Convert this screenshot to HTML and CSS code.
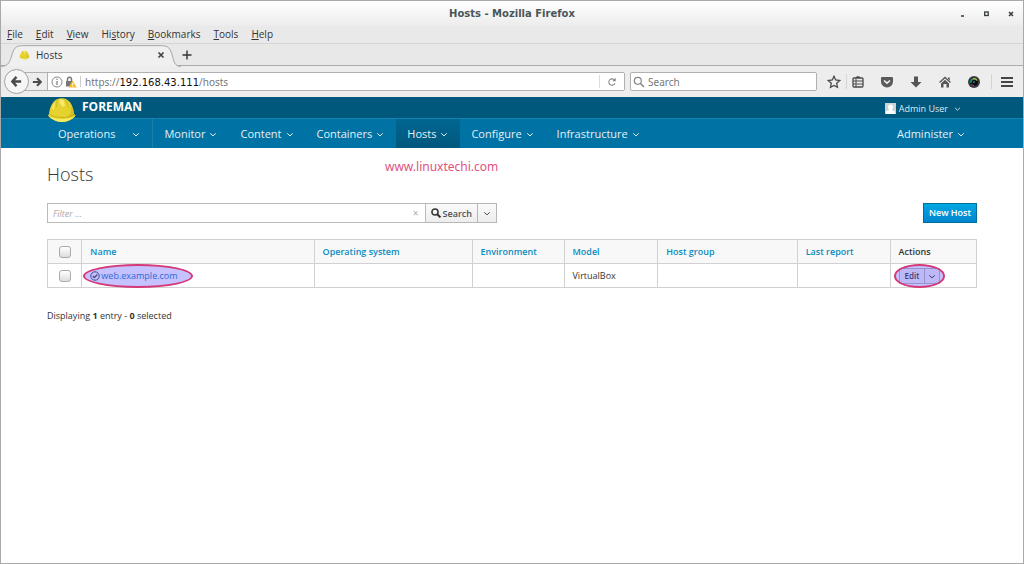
FILE: index.html
```html
<!DOCTYPE html>
<html lang="en">
<head>
<meta charset="utf-8">
<meta name="viewport" content="width=device-width, initial-scale=1">
<title>Hosts</title>
<link rel="stylesheet" href="styles.css">
</head>
<body>
<svg class="defs" aria-hidden="true">
  <symbol id="chev" viewBox="0 0 8 8"><path d="M1.2 3.300 4 5.900 6.800 3.300" fill="none" stroke="currentColor" stroke-width="1"/></symbol>
  <symbol id="helmet" viewBox="0 0 30 26">
    <path d="M2 17C3 8 7 1.500 14 1.200 22 1 26 7 27 17l1.500 1.500C26 22 21 25 15 25S4 22 1 18.500z" fill="#e6d22f"/>
    <path d="M24 8c2 3 3 6 3 9l1.500 1.500C26 22 21 25 15 25c5-3 10-8 9-17z" fill="#d0b920" opacity=".7"/>
    <path d="M1 18.500c6 4.500 21 4.500 27.500 0C26 22 21 25 15 25S4 22 1 18.500z" fill="#f6ec62"/>
    <path d="M3 17.500c6 4 18 4 24 0" fill="none" stroke="#c0a916" stroke-width=".8"/>
    <path d="M10.500 3C9.500 5 9 7 9.500 10M18 2.500c2 2 3 4 3 8" fill="none" stroke="#cdb824" stroke-width="1"/>
    <path d="M12 3c2-1 4-1 5 1l1 5c-2 1-4 0-5-2z" fill="#f5ea6c"/>
    <path d="M5 12c0-3 1-5 3-7l-1 8z" fill="#f5ea62"/>
  </symbol>
</svg>
<div class="window">
  <header class="titlebar">
    <h1 class="title">Hosts - Mozilla Firefox</h1>
    <div class="wm">
      <button class="wm-btn" aria-label="Minimize"><svg viewBox="0 0 8 8" width="8" height="8"><path d="M2 6h3" stroke="#333b3e" stroke-width="1.500"/></svg></button>
      <button class="wm-btn" aria-label="Maximize"><svg viewBox="0 0 8 8" width="8" height="8"><rect x="1.700" y="2" width="3.500" height="3.500" fill="none" stroke="#333b3e" stroke-width="1.300"/></svg></button>
      <button class="wm-btn" aria-label="Close"><svg viewBox="0 0 8 8" width="8" height="8"><path d="M2 2l4 4M6 2 2 6" stroke="#333b3e" stroke-width="1.500"/></svg></button>
    </div>
  </header>
  <nav class="menubar" aria-label="Menu bar">
    <button><u>F</u>ile</button><button><u>E</u>dit</button><button><u>V</u>iew</button><button>Hi<u>s</u>tory</button><button><u>B</u>ookmarks</button><button><u>T</u>ools</button><button><u>H</u>elp</button>
  </nav>
  <div class="tabs">
    <div class="tab">
      <svg class="tab-shape" viewBox="0 0 182 23" aria-hidden="true"><path d="M0 22.500C8 22.500 9 17 11 11S14 1.500 22 1.500H162C170 1.500 171 5 173 11S175 22.500 182 22.500" fill="#f0f0f0" stroke="#a5a5a5"/></svg>
      <svg class="favicon" width="11" height="10" aria-hidden="true"><use href="#helmet"/></svg>
      <span class="tab-name">Hosts</span>
      <button class="icon-btn" aria-label="Close tab"><svg viewBox="0 0 8 8" width="8" height="8"><path d="M1.500 1.500l5 5M6.500 1.500l-5 5" stroke="#444" stroke-width="1.700"/></svg></button>
    </div>
    <button class="icon-btn new-tab" aria-label="New tab"><svg viewBox="0 0 10 10" width="10" height="10"><path d="M5 .5v9M.5 5h9" stroke="#333" stroke-width="1.400"/></svg></button>
  </div>
  <div class="toolbar">
    <button class="back" aria-label="Back"><svg viewBox="0 0 14 14" width="13" height="13"><path d="M7 2 2.500 7 7 12M3 7h9" fill="none" stroke="#4a4a4a" stroke-width="2.600"/></svg></button>
    <div class="urlbar">
      <button class="fwd" aria-label="Forward"><svg viewBox="0 0 12 12" width="10" height="10"><path d="M6 1.500 10.500 6 6 10.500M10 6H1" fill="none" stroke="#4a4a4a" stroke-width="2.600"/></svg></button>
      <div class="url">
        <svg viewBox="0 0 12 12" width="12" height="12"><circle cx="6" cy="6" r="5" fill="none" stroke="#888"/><path d="M6 5v4M6 2.800v1.200" stroke="#777" stroke-width="1.200"/></svg>
        <svg viewBox="0 0 12 12" width="12" height="12"><path d="M2.500 5.500V3.500a2 2.200 0 0 1 4 0v2" fill="none" stroke="#777" stroke-width="1.500"/><rect x="1" y="5" width="7" height="5.500" fill="#777"/><path d="M7.500 4.500 11.800 11.500H3.600z" fill="#f8bd28"/><path d="M7.700 7v2M7.700 9.800v1" stroke="#fff"/></svg>
        <span class="sep"></span>
        <span class="address">https://<b>192.168.43.111</b>/hosts</span>
        <button class="reload" aria-label="Reload"><svg viewBox="0 0 12 12" width="10" height="10"><path d="M9.500 7.500A3.800 3.800 0 1 1 8.500 3.200" fill="none" stroke="#888" stroke-width="1.300"/><path d="M10.500 1v4.200H6.300z" fill="#888"/></svg></button>
      </div>
    </div>
    <label class="websearch">
      <svg viewBox="0 0 12 12" width="12" height="12"><circle cx="4.800" cy="4.800" r="3.500" fill="none" stroke="#888" stroke-width="1.200"/><path d="M7.500 7.500 11 11" stroke="#888" stroke-width="1.600"/></svg>
      <input type="search" placeholder="Search" aria-label="Web search">
    </label>
    <div class="tools">
      <button aria-label="Bookmark"><svg viewBox="0 0 14 14" width="14" height="14"><path d="M7 1.300 8.700 5l4 .5-3 2.800.8 4L7 10.400l-3.500 1.900.8-4-3-2.800 4-.5z" fill="none" stroke="#4a4a4a" stroke-width="1.300"/></svg></button>
      <span class="tool-sep"></span>
      <button aria-label="Bookmarks list"><svg viewBox="0 0 14 14" width="14" height="14"><rect x="2" y="3" width="10" height="9" rx="1" fill="none" stroke="#4a4a4a" stroke-width="1.300"/><path d="M4.500 3C4.500 .5 9.500 .5 9.500 3z" fill="#4a4a4a"/><path d="M2 6h10M2 9h10M5 4v8" fill="none" stroke="#4a4a4a"/></svg></button>
      <button aria-label="Pocket"><svg viewBox="0 0 14 14" width="14" height="14"><path d="M2 2h10q1 0 1 1v3.500a6 6 0 0 1-12 0V3q0-1 1-1z" fill="#5a5a5a"/><path d="M4 5.500 7 8.200l3-2.700" fill="none" stroke="#eee" stroke-width="1.600"/></svg></button>
      <button aria-label="Downloads"><svg viewBox="0 0 14 14" width="14" height="14"><path d="M5 1.500h4V7h3.500L7 12.500 1.500 7H5z" fill="#555"/></svg></button>
      <button aria-label="Home"><svg viewBox="0 0 14 14" width="14" height="14"><path d="M1.500 7.500 7 2.500l5.500 5" fill="none" stroke="#555" stroke-width="1.300"/><path d="M7 4.700 11 8.500V12.500H8.500V9h-3v3.500H3V8.500zM10 2.500h1.700v3l-1.700-1.500z" fill="#555"/></svg></button>
      <button aria-label="Camera add-on"><svg viewBox="0 0 14 14" width="14" height="14"><circle cx="7" cy="7" r="6" fill="#3a3c42"/><circle cx="7" cy="7" r="4" fill="#0b0b0f"/><path d="M4 8a3.500 3.500 0 0 1 2-4" fill="none" stroke="#18a46f" stroke-width="1.400"/><path d="M6 4a3.500 3.500 0 0 1 4 1.500" fill="none" stroke="#c9c04c" stroke-width="1.400"/><path d="M4.300 9a3 3 0 0 0 3 1.500" fill="none" stroke="#a64a77"/><path d="M6 7h2" stroke="#4fa8d8" stroke-width="1.200"/></svg></button>
      <span class="tool-sep wide"></span>
      <button aria-label="Menu"><svg viewBox="0 0 14 14" width="14" height="14"><path d="M1 3h12M1 7h12M1 11h12" stroke="#454545" stroke-width="2"/></svg></button>
    </div>
  </div>

  <div class="brandbar">
    <a class="brand" href="#"><svg class="logo" width="30" height="26" aria-hidden="true"><use href="#helmet"/></svg>FOREMAN</a>
    <button class="user"><svg viewBox="0 0 11 11" width="11" height="11"><path fill="#ccd2d8" d="M0 0h11v11H0z"/><path d="M5.500 1.500c1.700 0 2.500 1.200 2.500 2.500S7 6.500 7 7l3 1.500V11H1V8.500L4 7c0-.5-1-1.500-1-3s.8-2.500 2.500-2.500z" fill="#fff"/></svg><span>Admin User</span><svg class="chev" width="7" height="7"><use href="#chev"/></svg></button>
  </div>
  <nav class="mainnav" aria-label="Main">
    <button class="nav-item context">Operations<svg class="chev" width="8" height="8"><use href="#chev"/></svg></button>
    <button class="nav-item">Monitor<svg class="chev" width="8" height="8"><use href="#chev"/></svg></button>
    <button class="nav-item">Content<svg class="chev" width="8" height="8"><use href="#chev"/></svg></button>
    <button class="nav-item">Containers<svg class="chev" width="8" height="8"><use href="#chev"/></svg></button>
    <button class="nav-item active">Hosts<svg class="chev" width="8" height="8"><use href="#chev"/></svg></button>
    <button class="nav-item">Configure<svg class="chev" width="8" height="8"><use href="#chev"/></svg></button>
    <button class="nav-item">Infrastructure<svg class="chev" width="8" height="8"><use href="#chev"/></svg></button>
    <button class="nav-item last">Administer<svg class="chev" width="8" height="8"><use href="#chev"/></svg></button>
  </nav>

  <main class="page">
    <div class="heading"><h2>Hosts</h2><span class="site">www.linuxtechi.com</span></div>
    <div class="actions">
      <form class="filter">
        <div class="filter-box"><input type="text" placeholder="Filter ..." aria-label="Filter"><button type="button" class="clear" aria-label="Clear">×</button></div>
        <button type="button" class="btn"><svg viewBox="0 0 12 12" width="10" height="10"><circle cx="4.800" cy="4.800" r="3.700" fill="none" stroke="#333" stroke-width="1.800"/><path d="M7.500 7.500 11.300 11.300" stroke="#333" stroke-width="2.400"/></svg>Search</button>
        <button type="button" class="btn drop" aria-label="Saved searches"><svg width="8" height="8"><use href="#chev"/></svg></button>
      </form>
      <a class="new-host" href="#">New Host</a>
    </div>
    <table class="hosts">
      <colgroup><col class="c-check"><col class="c-name"><col class="c-os"><col class="c-env"><col class="c-model"><col class="c-group"><col class="c-report"><col></colgroup>
      <thead><tr>
        <th class="check"><input type="checkbox" aria-label="Select all"></th>
        <th><a href="#">Name</a></th><th><a href="#">Operating system</a></th><th><a href="#">Environment</a></th><th><a href="#">Model</a></th><th><a href="#">Host group</a></th><th><a href="#">Last report</a></th><th>Actions</th>
      </tr></thead>
      <tbody><tr>
        <td class="check"><input type="checkbox" aria-label="Select web.example.com"></td>
        <td><span class="marked"><a class="host" href="#"><svg viewBox="0 0 10 10" width="10" height="10"><circle cx="5" cy="5" r="4.200" fill="none" stroke="#3a4a58"/><path d="M2.800 5 4.500 6.600 7.300 3.600" fill="none" stroke="#3a4a58" stroke-width="1.400"/></svg>web.example.com</a><span class="ring ring-name"></span></span></td>
        <td></td><td></td><td>VirtualBox</td><td></td><td></td>
        <td><span class="marked"><button class="edit">Edit</button><button class="edit edit-drop" aria-label="More actions"><svg width="8" height="8"><use href="#chev"/></svg></button><span class="ring ring-edit"></span></span></td>
      </tr></tbody>
    </table>
    <p class="summary">Displaying <b>1</b> entry - <b>0</b> selected</p>
  </main>
</div>
</body>
</html>
```
FILE: styles.css
```css
* { box-sizing: border-box; }
body { margin: 0; background: #fff; font-family: "Open Sans", sans-serif; font-size: 9px; color: #333; }
button, input { font: inherit; color: inherit; margin: 0; }
button { padding: 0; border: 0; background: none; white-space: nowrap; }
a { color: #0b8bc0; text-decoration: none; }
svg { display: block; flex: none; }
.defs { position: absolute; width: 0; height: 0; }
.window { min-height: 100vh; border: 1px solid #a9a9a9; }

.titlebar { display: grid; grid-template-columns: 1fr auto 1fr; align-items: center; height: 25px; background: linear-gradient(#fff, #ececec); }
.title { grid-column: 2; margin: 0; font: bold 10px "DejaVu Sans", sans-serif; color: #4a5558; }
.wm { display: flex; justify-content: flex-end; gap: 16px; padding-right: 8px; }
.menubar { display: flex; align-items: center; gap: 13px; height: 18px; padding: 0 6px 2px; background: #e9e9e9; border-bottom: 1px solid #d6d6d6; font-size: 10px; color: #333; }
.tabs { display: flex; align-items: center; height: 22px; background: #e8e8e8; box-shadow: inset 0 -1px #ababab; }
.tab { position: relative; display: flex; align-items: center; width: 180px; height: 22px; padding: 0 16px 0 18px; font-size: 10px; }
.tab > * { position: relative; }
.tab > .tab-shape { position: absolute; inset: 0; width: 100%; height: 23px; }
.tab-name { flex: 1; margin-left: 6px; }
.new-tab { margin-left: 1px; }
.toolbar { display: flex; align-items: center; height: 31px; padding: 0 9px 0 3px; background: #ededed; font-family: "Noto Sans", sans-serif; font-size: 10px; }
.back { position: relative; flex: none; display: grid; place-items: center; width: 25px; height: 25px; border: 1px solid #a0a0a0; border-radius: 50%; background: #f6f6f6; }
.urlbar { display: flex; flex: 1; height: 19px; margin-left: -6px; border: 1px solid #b0b0b0; border-radius: 2px; }
.fwd { display: grid; place-items: center; width: 24px; padding-left: 3px; border-right: 1px solid #b0b0b0; }
.url { display: flex; flex: 1; align-items: center; gap: 2px; padding-left: 3px; background: #fff; }
.sep { width: 1px; height: 11px; margin: 0 2px 0 1px; background: #ccc; }
.address { flex: 1; color: #777; }
.address b { font-family: "DejaVu Sans", sans-serif; font-weight: normal; color: #111; }
.reload { display: grid; place-items: center; width: 25px; height: 13px; border-left: 1px solid #ddd; }
.websearch { display: flex; align-items: center; gap: 3px; width: 187px; height: 19px; margin-left: 5px; padding: 0 2px; border: 1px solid #b0b0b0; border-radius: 2px; background: #fff; }
.websearch input { flex: 1; min-width: 0; padding: 0; border: 0; background: none; outline: 0; }
.websearch input::placeholder { color: #777; }
.tools { display: flex; align-items: center; margin-left: 10px; }
.tools button + button { margin-left: 15px; }
.tool-sep { width: 1px; height: 15px; margin: 0 4px 0 5px; background: #d4d4d4; }
.tool-sep.wide { margin: 0 8px 0 10px; }

.brandbar { display: flex; justify-content: space-between; height: 21px; padding: 0 62px 0 46px; background: #00587c; color: #dcebf1; }
.brand { display: flex; align-items: center; gap: 5px; height: 18px; color: #fff; font-size: 12px; font-weight: bold; }
.logo { position: relative; z-index: 1; align-self: flex-start; }
.user { display: flex; align-items: center; gap: 3px; padding-top: 1px; }
.user .chev { margin-left: 3px; }
.mainnav { display: flex; height: 30px; padding: 0 46px; background: #0072a3; border-top: 1px solid #1581ae; color: #e4f1f7; font-size: 11px; }
.nav-item { display: flex; align-items: center; gap: 4px; padding: 0 12px 0 11px; }
.context { gap: 17px; border-right: 1px solid #1a80ab; }
.active { background: linear-gradient(#006692, #00587c); }
.last { margin-left: auto; }

.page { padding: 15px 46px; }
.heading { display: grid; grid-template-columns: 338px 1fr; align-items: start; }
.heading h2 { margin: 0; font-size: 18px; font-weight: 300; line-height: 22px; }
.site { color: #e0527f; font-family: "Noto Sans", sans-serif; font-size: 12px; line-height: 8px; }
.actions { display: flex; justify-content: space-between; align-items: center; margin-top: 18px; }
.filter { display: flex; width: 450px; }
.filter-box { display: flex; flex: 1; height: 20px; border: 1px solid #bbb; }
.filter-box input { flex: 1; min-width: 0; padding: 0 5px; border: 0; outline: 0; }
.filter-box input::placeholder { color: #aaa; font-style: italic; }
.clear { padding: 0 6px; color: #aaa; font-size: 10px; }
.btn { display: flex; align-items: center; gap: 2px; height: 20px; padding: 0 5px; border: 1px solid #b7b7b7; border-left: 0; background: linear-gradient(#fafafa, #ededed); font-weight: 600; color: #4d5258; }
.new-host { height: 20px; padding: 0 5px; border: 1px solid #006e9c; background: linear-gradient(#00a8e1, #0085cf); color: #fff; font-weight: 600; line-height: 18px; }
.hosts { width: 100%; margin-top: 16px; border-collapse: collapse; table-layout: fixed; }
.c-check { width: 3.7%; } .c-name { width: 25%; } .c-os { width: 17%; } .c-env { width: 9.9%; } .c-model { width: 10.1%; } .c-group { width: 15%; } .c-report { width: 10%; }
.hosts th, .hosts td { height: 24px; padding: 0 8px; border: 1px solid #d1d1d1; text-align: left; white-space: nowrap; line-height: 14px; }
.hosts th { background: #f8f8f8; font-weight: 600; }
.hosts .check { text-align: center; }
.check input { appearance: none; display: block; width: 12px; height: 12px; margin: 0 auto; border: 1px solid #aaa; border-radius: 3px; background: linear-gradient(#fff, #ddd); }
.marked { position: relative; display: inline-flex; vertical-align: middle; }
.host { display: flex; align-items: center; gap: 1px; color: #0b78bf; }
.ring { position: absolute; border: 2px solid #d43a78; border-radius: 50%; background: rgb(90 80 255 / 35%); pointer-events: none; }
.ring-name { inset: -5px -15px -5px -7px; }
.ring-edit { inset: -4px -5px; }
.edit { display: grid; place-items: center; height: 16px; padding: 0 5px; border: 1px solid #b7b7b7; background: #f1f1f1; font-size: 8px; font-weight: 600; }
.edit-drop { padding: 0 3px; border-left: 0; }
.summary { margin: 21px 0 0; line-height: 14px; }
```
